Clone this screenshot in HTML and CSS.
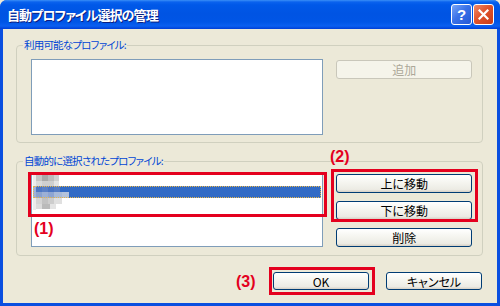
FILE: index.html
```html
<!DOCTYPE html>
<html lang="ja">
<head>
    <meta charset="UTF-8">
    <title>自動プロファイル選択の管理</title>
    <link rel="stylesheet" href="styles.css">
</head>
<body>

<div class="window">
    <div class="titlebar">
        <span class="title">自動プロファイル選択の管理</span>
        <div class="title-buttons">
            <span class="tbtn help">?</span>
            <span class="tbtn close">
                <svg width="11" height="11" viewBox="0 0 11 11">
                    <path d="M1.5 1.5 L9.5 9.5 M9.5 1.5 L1.5 9.5" stroke="#fff" stroke-width="2.2" stroke-linecap="square"/>
                </svg>
            </span>
        </div>
    </div>

    <div class="client">
        <fieldset class="group group-top">
            <legend>利用可能なプロファイル:</legend>
            <div class="group-row">
                <div class="listbox list-available"></div>
                <div class="side">
                    <button class="btn" disabled>追加</button>
                </div>
            </div>
        </fieldset>

        <fieldset class="group group-bottom">
            <legend>自動的に選択されたプロファイル:</legend>
            <div class="group-row">
                <div class="listbox list-selected">
                    <div class="item">
                        <svg width="36" height="12" viewBox="0 0 36 12">
                            <rect x="0" y="0" width="3" height="12" fill="#ececec"/>
                            <rect x="3" y="1" width="6" height="6" fill="#c4c4c4"/>
                            <rect x="9" y="1" width="6" height="6" fill="#a8a8a8"/>
                            <rect x="15" y="1" width="6" height="6" fill="#bcbcbc"/>
                            <rect x="21" y="1" width="5" height="6" fill="#d0d0d0"/>
                            <rect x="3" y="7" width="6" height="5" fill="#dadada"/>
                            <rect x="9" y="7" width="12" height="5" fill="#cfcfcf"/>
                            <rect x="21" y="7" width="5" height="5" fill="#e4e4e4"/>
                        </svg>
                    </div>
                    <div class="item selected">
                        <svg width="38" height="12" viewBox="0 0 38 12">
                            <rect x="0" y="0" width="3" height="12" fill="#9fb3da"/>
                            <rect x="3" y="0" width="6" height="6" fill="#4d78c6"/>
                            <rect x="9" y="0" width="6" height="6" fill="#5a80c6"/>
                            <rect x="15" y="0" width="6" height="6" fill="#4a74c2"/>
                            <rect x="21" y="0" width="6" height="6" fill="#557cc4"/>
                            <rect x="3" y="6" width="6" height="6" fill="#8aa2d0"/>
                            <rect x="9" y="6" width="6" height="6" fill="#9cb0d6"/>
                            <rect x="15" y="6" width="6" height="6" fill="#8ea5d2"/>
                            <rect x="21" y="6" width="8" height="6" fill="#a8bad9"/>
                            <rect x="29" y="6" width="7" height="6" fill="#b4c3dc"/>
                        </svg>
                    </div>
                    <div class="item">
                        <svg width="36" height="12" viewBox="0 0 36 12">
                            <rect x="0" y="0" width="3" height="12" fill="#ececec"/>
                            <rect x="3" y="0" width="6" height="6" fill="#d4d4d4"/>
                            <rect x="9" y="0" width="6" height="6" fill="#c2c2c2"/>
                            <rect x="15" y="0" width="6" height="6" fill="#cdcdcd"/>
                            <rect x="21" y="0" width="8" height="6" fill="#e0e0e0"/>
                            <rect x="3" y="6" width="6" height="5" fill="#dcdcdc"/>
                            <rect x="9" y="6" width="8" height="5" fill="#bababa"/>
                            <rect x="17" y="6" width="6" height="5" fill="#e4e4e4"/>
                        </svg>
                    </div>
                </div>
                <div class="side">
                    <button class="btn">上に移動</button>
                    <button class="btn">下に移動</button>
                    <button class="btn">削除</button>
                </div>
            </div>
        </fieldset>

        <div class="footer">
            <button class="btn btn-wide">OK</button>
            <button class="btn btn-wide">キャンセル</button>
        </div>
    </div>

    <!-- red annotations laid over the dialog -->
    <div class="mark box-list"></div>
    <div class="mark box-move"></div>
    <div class="mark box-ok"></div>
    <span class="note note-1">(1)</span>
    <span class="note note-2">(2)</span>
    <span class="note note-3">(3)</span>
</div>

</body>
</html>
```

FILE: styles.css
```css
body {
    margin: 0;
    padding: 0;
    background-color: #ece9d8;
    font-family: "Noto Sans CJK JP", "Liberation Sans", sans-serif;
}
.window {
    position: relative;
    width: 500px;
    height: 306px;
    box-sizing: border-box;
    display: flex;
    flex-direction: column;
    background-color: #0a4fe0;
    border-radius: 7px 7px 0 0;
    overflow: hidden;
}
.titlebar {
    height: 29px;
    flex: none;
    display: flex;
    align-items: center;
    justify-content: space-between;
    padding: 0 6px 0 7px;
    background: linear-gradient(to bottom, #3a8ff7 0, #0a62ee 2px, #0058e8 5px, #0054e3 14px, #0055e6 22px, #0a5ff0 26px, #003ed6 29px);
}
.title {
    color: #fff;
    font-size: 13px;
    font-weight: bold;
    font-feature-settings: "palt";
    letter-spacing: -0.9px;
    text-shadow: 1px 1px 0 #0a1e80;
    padding-bottom: 1px;
}
.title-buttons {
    display: flex;
    gap: 1px;
    padding-bottom: 1px;
}
.tbtn {
    width: 19px;
    height: 19px;
    border: 1px solid #fff;
    border-radius: 3px;
    display: flex;
    align-items: center;
    justify-content: center;
    color: #fff;
    font-family: "Liberation Sans", sans-serif;
    font-weight: bold;
    font-size: 15px;
}
.help {
    background: linear-gradient(135deg, #7aa6f7 0, #3a72e8 45%, #2458d6 100%);
}
.close {
    background: linear-gradient(135deg, #f08a6a 0, #e0532c 45%, #c83c18 100%);
}
.client {
    flex: 1;
    margin: 0 3px 3px 3px;
    background-color: #ece9d8;
    padding: 10px 14px 0 13px;
}
.group {
    margin: 0;
    padding: 8px 10px 7px 14px;
    border: 1px solid #d0d0bf;
    border-radius: 4px;
    min-width: 0;
}
.group legend {
    color: #0046d5;
    font-size: 10.5px;
    line-height: 12px;
    font-feature-settings: "palt";
    letter-spacing: -0.8px;
    padding: 0 1px;
    margin-left: -8px;
}
.group-bottom {
    margin-top: 12px;
    padding-top: 6px;
    padding-bottom: 8px;
}
.group-row {
    display: flex;
    gap: 13px;
}
.listbox {
    width: 293px;
    box-sizing: border-box;
    border: 1px solid #7f9db9;
    background-color: #fff;
}
.list-available {
    height: 76px;
}
.list-selected {
    height: 74px;
    padding: 0 1px 0 1px;
}
.item {
    height: 12px;
    display: flex;
    align-items: center;
}
.item.selected {
    background-color: #316ac5;
    outline: 1px dotted #e8b64a;
    outline-offset: -1px;
}
.side {
    width: 136px;
    display: flex;
    flex-direction: column;
    gap: 8px;
    padding-top: 1px;
}
.btn {
    height: 19px;
    box-sizing: border-box;
    border: 1px solid #003c74;
    border-radius: 3px;
    background: linear-gradient(to bottom, #ffffff 0, #f6f6f1 40%, #ecebe4 85%, #d6d0c5 100%);
    font-family: "Noto Sans CJK JP", "Liberation Sans", sans-serif;
    font-size: 12px;
    font-feature-settings: "palt";
    line-height: 15px;
    color: #000;
    padding: 0;
}
.btn:disabled {
    border-color: #c9c7ba;
    background: #f5f4ea;
    color: #aca899;
}
.footer {
    display: flex;
    justify-content: flex-end;
    gap: 17px;
    padding-top: 16px;
    padding-right: 1px;
}
.btn-wide {
    width: 96px;
    height: 18px;
}
.mark {
    position: absolute;
    border: 3px solid #e4001e;
    box-sizing: border-box;
}
.box-list {
    left: 28px;
    top: 172px;
    width: 299px;
    height: 45px;
}
.box-move {
    left: 331px;
    top: 169px;
    width: 147px;
    height: 53px;
}
.box-ok {
    left: 269px;
    top: 267px;
    width: 106px;
    height: 28px;
}
.note {
    position: absolute;
    color: #e4001e;
    font-family: "Liberation Sans", sans-serif;
    font-weight: bold;
    font-size: 16px;
    line-height: 16px;
}
.note-1 {
    left: 34px;
    top: 221px;
}
.note-2 {
    left: 330px;
    top: 149px;
}
.note-3 {
    left: 236px;
    top: 274px;
}
```
